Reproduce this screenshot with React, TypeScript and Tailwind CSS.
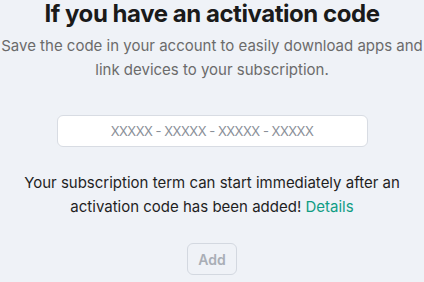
import { useState } from "react"

const ActivationCodePage = () => {
  const [code, setCode] = useState("")

  return (
    <div className="min-h-[282px] w-[424px] bg-[#eff2f7] font-['Inter',sans-serif] flex flex-col items-center text-center">
      <h1 className="text-[24px] leading-[28px] font-bold text-[#1a1a1a] tracking-[-0.45px]">
        If you have an activation code
      </h1>
      <p className="mt-[6px] text-[15px] leading-[24px] text-[#6b6b6b]">
        Save the code in your account to easily download apps and
        <br />
        link devices to your subscription.
      </p>

      <input
        className="mt-[33px] w-[311px] h-[32px] rounded-[6px] border border-[#d8dce3] bg-white text-center text-[13px] tracking-[-0.5px] text-[#333] placeholder:text-[#8a8f98] outline-none"
        placeholder="XXXXX - XXXXX - XXXXX - XXXXX"
        value={code}
        onChange={(e) => setCode(e.target.value)}
      />

      <p className="mt-[24px] text-[15px] leading-[24px] text-[#1f1f1f]">
        Your subscription term can start immediately after an
        <br />
        activation code has been added!{" "}
        <a href="#" className="text-[#0f9d84]">
          Details
        </a>
      </p>

      <button
        disabled={!code.trim()}
        className="mt-[24px] h-[32px] px-[10px] rounded-[6px] border border-[#d3d8e0] bg-transparent text-[14px] font-semibold text-[#a9aeb6]"
      >
        Add
      </button>
    </div>
  )
}

export default ActivationCodePage
